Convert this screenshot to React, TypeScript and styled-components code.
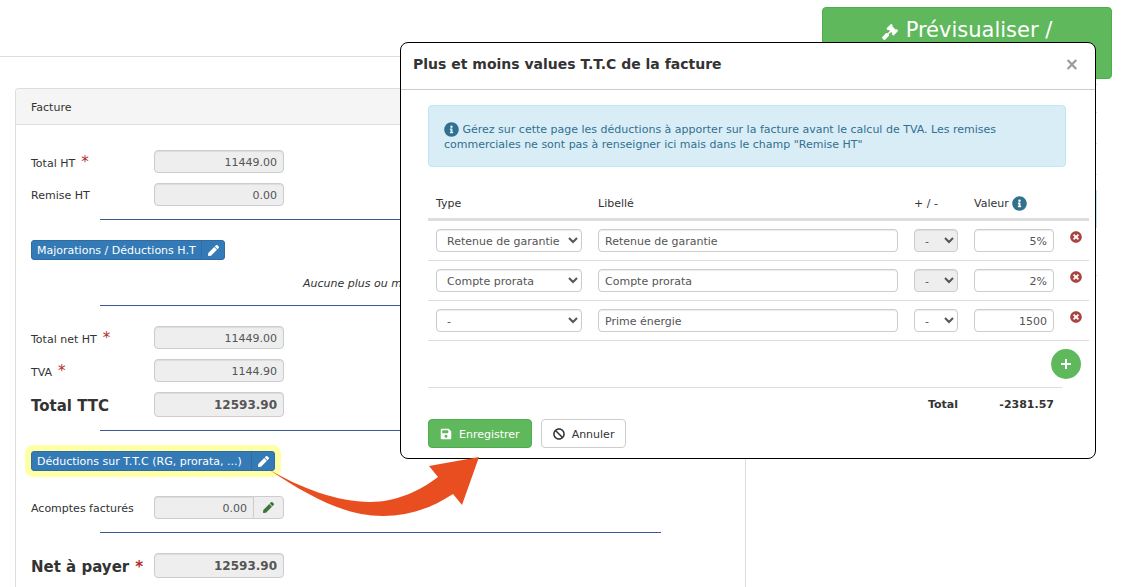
import React from "react";
import styled, { createGlobalStyle, css } from "styled-components";
import {
  FaBan,
  FaGavel,
  FaInfoCircle,
  FaPen,
  FaSave,
  FaTimesCircle,
} from "react-icons/fa";

const GlobalStyle = createGlobalStyle`
  *, *::before, *::after { box-sizing: border-box; }
  body {
    margin: 0;
    background: #fff;
    color: #333;
    font: 11px/15px "DejaVu Sans", Verdana, sans-serif;
  }
  button, input, select { font: inherit; margin: 0; }
`;

const Page = styled.div`
  position: relative;
  display: flex;
  flex-direction: column;
  min-height: 100vh;
  overflow: hidden;
`;

const TopBar = styled.header`
  display: flex;
  align-items: flex-start;
  height: 84px;
  padding-right: 14px;
`;

const TopRule = styled.div`
  flex: 1;
  height: 57px;
  border-bottom: 1px solid #ddd;
`;

const PreviewButton = styled.button`
  display: flex;
  justify-content: center;
  align-items: flex-start;
  gap: 8px;
  width: 290px;
  height: 72px;
  margin-top: 7px;
  padding: 7px 12px 5px;
  border: 1px solid #4cae4c;
  border-radius: 4px;
  background: #5fb85c;
  color: #fff;
  font-size: 21px;
  line-height: 30px;

  svg { width: 16px; height: 16px; margin-top: 9px; }
`;

const Columns = styled.main`
  flex: 1;
  display: grid;
  grid-template-columns: 731fr 321fr;
  gap: 30px;
  padding: 0 29px 0 15px;
`;

const Panel = styled.section`
  margin-top: 4px;
  border: 1px solid #ddd;
  border-bottom: 0;
  border-radius: 4px 4px 0 0;
`;

const PanelTitle = styled.h2`
  margin: 0;
  padding: 11px 15px 9px;
  border-bottom: 1px solid #ddd;
  border-radius: 4px 4px 0 0;
  background: #f5f5f5;
  font-size: 11px;
  font-weight: 400;
`;

const PanelBody = styled.div`
  padding: 25px 15px 8px;
`;

const Fields = styled.div`
  display: grid;
  gap: 10px;
`;

const Field = styled.div<{ $strong?: boolean }>`
  display: grid;
  grid-template-columns: 123px 130px;
  align-items: center;
  color: #333;
  ${(p) => p.$strong && css`font-weight: 700;`}

  label {
    padding-top: ${(p) => (p.$strong ? "4px" : "2px")};
    font-size: ${(p) => (p.$strong ? "15px" : "11px")};
    white-space: nowrap;
  }
`;

const Required = styled.span`
  margin-left: 6px;
  color: #b52b27;
  font-size: 15px;
`;

const control = css`
  height: 23px;
  border: 1px solid #ccc;
  border-radius: 4px;
  background: #fff;
  color: #555;
  box-shadow: inset 0 1px 1px rgba(0, 0, 0, 0.075);
`;

const TextInput = styled.input<{ $right?: boolean; $strong?: boolean }>`
  ${control}
  width: 100%;
  min-width: 0;
  padding: 2px 6px 0;
  text-align: ${(p) => (p.$right ? "right" : "left")};
  ${(p) => p.$strong && css`height: 25px; padding-top: 0; font-size: 12px; font-weight: 700;`}
  &:read-only { background: #eee; }
`;

const Select = styled.select`
  ${control}
  width: 100%;
  padding: 2px 0 0 6px;
  opacity: 1;
  &:disabled { background: #eee; }
`;

const InputGroup = styled.div`
  display: flex;
  ${TextInput} { border-radius: 4px 0 0 4px; border-right: 0; }
`;

const AddonButton = styled.button`
  display: grid;
  place-items: center;
  flex: 0 0 31px;
  height: 23px;
  padding: 0;
  border: 1px solid #ccc;
  border-radius: 0 4px 4px 0;
  background: #eee;
  color: #3c763d;
`;

const Rule = styled.hr`
  margin: 13px 69px 20px;
  border: 0;
  border-top: 1px solid #3b5998;
`;

const SplitButton = styled.button<{ $highlight?: boolean }>`
  display: flex;
  align-items: center;
  height: 20px;
  padding: 0 5px;
  border: 1px solid #2e6da4;
  border-radius: 3px;
  background: #337ab7;
  color: #fff;
  line-height: 18px;
  ${(p) =>
    p.$highlight &&
    css`
      min-width: 244px;
      box-shadow: 0 0 0 6px #ffffa6;
    `}

  svg { width: 11px; height: 11px; }
`;

const SplitText = styled.span`
  padding-top: 1px;
`;

const SplitGap = styled.span`
  flex: 1 0 5px;
`;

const SplitIcon = styled.span`
  display: flex;
  align-items: center;
  height: 18px;
  padding-left: 6px;
  border-left: 1px solid #2e6da4;
`;

const EmptyNote = styled.p`
  margin: 16px 0 13px;
  line-height: 16px;
  text-align: center;
  font-style: italic;
`;

const Section = styled.div`
  margin-bottom: 25px;
`;

const Aside = styled.aside`
  border-top: 1px solid #ddd;
  padding-top: 27px;
`;

const AsideRow = styled.div`
  height: 31px;
  border-top: 1px solid #ddd;
`;

const AsideNotice = styled.div`
  height: 38px;
  margin: -15px 0 47px;
  border: 1px solid #bce8f1;
  background: #d9edf7;
`;

const Modal = styled.section`
  position: absolute;
  top: 42px;
  left: 400px;
  right: 30px;
  border: 1px solid #000;
  border-radius: 8px;
  background: #fff;
`;

const ModalHeader = styled.header`
  display: flex;
  justify-content: space-between;
  align-items: center;
  height: 47px;
  padding: 0 16px 4px 12px;
  border-bottom: 1px solid #ccc;

  h1 { margin: 0; font-size: 14px; line-height: 20px; }
`;

const CloseButton = styled.button`
  padding: 0;
  border: 0;
  background: none;
  color: #999;
  font-size: 17px;
  font-weight: 700;
  line-height: 20px;
`;

const ModalBody = styled.div`
  padding: 15px 6px 10px 27px;
`;

const Alert = styled.p`
  margin: 0 23px 20px 0;
  padding: 16px 15px 14px;
  border: 1px solid #bce8f1;
  border-radius: 4px;
  background: #d9edf7;
  color: #31708f;
`;

const InfoIcon = styled(FaInfoCircle)`
  width: 15px;
  height: 15px;
  margin: -2px 0 -2px 0;
  vertical-align: -2px;
  color: #31708f;
`;

const Lines = styled.table`
  width: 100%;
  table-layout: fixed;
  border-collapse: separate;
  border-spacing: 0;

  th, td { padding: 8px; vertical-align: top; }
  th { text-align: left; font-weight: 400; white-space: nowrap; }
  thead th { padding: 9px 8px 7px; border-bottom: 3px solid #ddd; }
  tbody td { border-bottom: 1px solid #ddd; }
  td input, td select { display: block; }
`;

const Col = styled.col<{ $w?: number }>`
  ${(p) => p.$w && css`width: ${p.$w}px;`}
`;

const IconCell = styled.td`
  && { padding: 10px 8px; }
`;

const DeleteButton = styled.button`
  display: block;
  padding: 0;
  border: 0;
  background: none;
  color: #a94442;
  svg { display: block; width: 12px; height: 12px; }
`;

const AddButton = styled.button`
  display: grid;
  place-items: center;
  width: 30px;
  height: 30px;
  margin-left: auto;
  padding: 0;
  border: 0;
  border-radius: 50%;
  background: #5fb85c;
  color: #fff;
`;

const TotalCell = styled.td`
  && {
    padding-top: 9px;
    padding-bottom: 7px;
    border-top: 1px solid #ddd;
    text-align: right;
    font-weight: 700;
  }
`;

const Actions = styled.div`
  display: flex;
  gap: 9px;
`;

const ActionButton = styled.button<{ $primary?: boolean }>`
  display: flex;
  align-items: center;
  gap: 7px;
  height: 29px;
  padding: 1px 11px 0;
  border: 1px solid ${(p) => (p.$primary ? "#4cae4c" : "#ccc")};
  border-radius: 4px;
  background: ${(p) => (p.$primary ? "#5fb85c" : "#fff")};
  color: ${(p) => (p.$primary ? "#fff" : "#333")};
  svg { width: auto; height: 12px; }
`;

const Arrow = styled.svg`
  position: absolute;
  top: 450px;
  left: 260px;
  width: 230px;
  height: 75px;
  pointer-events: none;
`;

type AmountProps = { id: string; label: string; value: string; required?: boolean; strong?: boolean };

function Amount({ id, label, value, required, strong }: AmountProps) {
  return (
    <Field $strong={strong}>
      <label htmlFor={id}>
        {label}
        {required && <Required>*</Required>}
      </label>
      <TextInput id={id} readOnly $right $strong={strong} value={value} />
    </Field>
  );
}

function EditButton({ text, highlight }: { text: string; highlight?: boolean }) {
  return (
    <SplitButton type="button" $highlight={highlight}>
      <SplitText>{text}</SplitText>
      <SplitGap />
      <SplitIcon><FaPen /></SplitIcon>
    </SplitButton>
  );
}

const lines = [
  { type: "Retenue de garantie", label: "Retenue de garantie", value: "5%", locked: true },
  { type: "Compte prorata", label: "Compte prorata", value: "2%", locked: true },
  { type: "-", label: "Prime énergie", value: "1500", locked: false },
];

export default function App() {
  return (
    <Page>
      <GlobalStyle />
      <TopBar>
        <TopRule />
        <PreviewButton type="button">
          <FaGavel /> Prévisualiser /
        </PreviewButton>
      </TopBar>

      <Columns>
        <Panel>
          <PanelTitle>Facture</PanelTitle>
          <PanelBody>
            <Fields>
              <Amount id="total-ht" label="Total HT" value="11449.00" required />
              <Amount id="remise-ht" label="Remise HT" value="0.00" />
            </Fields>
            <Rule />
            <EditButton text="Majorations / Déductions H.T" />
            <EmptyNote>Aucune plus ou moins value</EmptyNote>
            <Rule />
            <Fields>
              <Amount id="net-ht" label="Total net HT" value="11449.00" required />
              <Amount id="tva" label="TVA" value="1144.90" required />
              <Amount id="total-ttc" label="Total TTC" value="12593.90" strong />
            </Fields>
            <Rule />
            <Section>
              <EditButton text="Déductions sur T.T.C (RG, prorata, ...)" highlight />
            </Section>
            <Field>
              <label htmlFor="acomptes">Acomptes facturés</label>
              <InputGroup>
                <TextInput id="acomptes" readOnly $right value="0.00" />
                <AddonButton type="button" aria-label="Modifier les acomptes">
                  <FaPen />
                </AddonButton>
              </InputGroup>
            </Field>
            <Rule />
            <Amount id="net" label="Net à payer" value="12593.90" required strong />
          </PanelBody>
        </Panel>
        <Aside>
          <AsideRow />
          <AsideRow />
          <AsideRow />
          <AsideNotice />
          <AsideRow />
        </Aside>
      </Columns>

      <Modal role="dialog" aria-labelledby="modal-title">
        <ModalHeader>
          <h1 id="modal-title">Plus et moins values T.T.C de la facture</h1>
          <CloseButton type="button" aria-label="Fermer">×</CloseButton>
        </ModalHeader>
        <ModalBody>
          <Alert>
            <InfoIcon /> Gérez sur cette page les déductions à apporter sur la facture avant le
            calcul de TVA. Les remises commerciales ne sont pas à renseigner ici mais dans le champ
            "Remise HT"
          </Alert>
          <Lines>
            <colgroup>
              <Col $w={162} />
              <Col />
              <Col $w={60} />
              <Col $w={96} />
              <Col $w={27} />
            </colgroup>
            <thead>
              <tr>
                <th>Type</th>
                <th>Libellé</th>
                <th>+ / -</th>
                <th>Valeur <InfoIcon /></th>
                <th />
              </tr>
            </thead>
            <tbody>
              {lines.map((line) => (
                <tr key={line.label}>
                  <td>
                    <Select aria-label="Type" defaultValue={line.type}>
                      <option>{line.type}</option>
                    </Select>
                  </td>
                  <td><TextInput aria-label="Libellé" defaultValue={line.label} /></td>
                  <td>
                    <Select aria-label="Signe" disabled={line.locked}>
                      <option>-</option>
                    </Select>
                  </td>
                  <td><TextInput aria-label="Valeur" $right defaultValue={line.value} /></td>
                  <IconCell>
                    <DeleteButton type="button" aria-label="Supprimer"><FaTimesCircle /></DeleteButton>
                  </IconCell>
                </tr>
              ))}
            </tbody>
            <tfoot>
              <tr>
                <td colSpan={5}>
                  <AddButton type="button" aria-label="Ajouter">
                    <svg width="10" height="10" viewBox="0 0 10 10">
                      <path d="M5 0V10M0 5H10" stroke="currentColor" strokeWidth="2" />
                    </svg>
                  </AddButton>
                </td>
              </tr>
              <tr>
                <TotalCell colSpan={3}>Total</TotalCell>
                <TotalCell>-2381.57</TotalCell>
                <td />
              </tr>
            </tfoot>
          </Lines>
          <Actions>
            <ActionButton type="submit" $primary><FaSave /> Enregistrer</ActionButton>
            <ActionButton type="button"><FaBan /> Annuler</ActionButton>
          </Actions>
        </ModalBody>
      </Modal>

      <Arrow viewBox="260 450 230 75" aria-hidden="true">
        <path
          d="M268 469C300 488 338 502 370 502C396 502 420 491 438 477L429 466L479 457L462 505L453 494C432 508 408 516 383 516C345 516 310 497 268 469Z"
          fill="#e94e20"
        />
      </Arrow>
    </Page>
  );
}
